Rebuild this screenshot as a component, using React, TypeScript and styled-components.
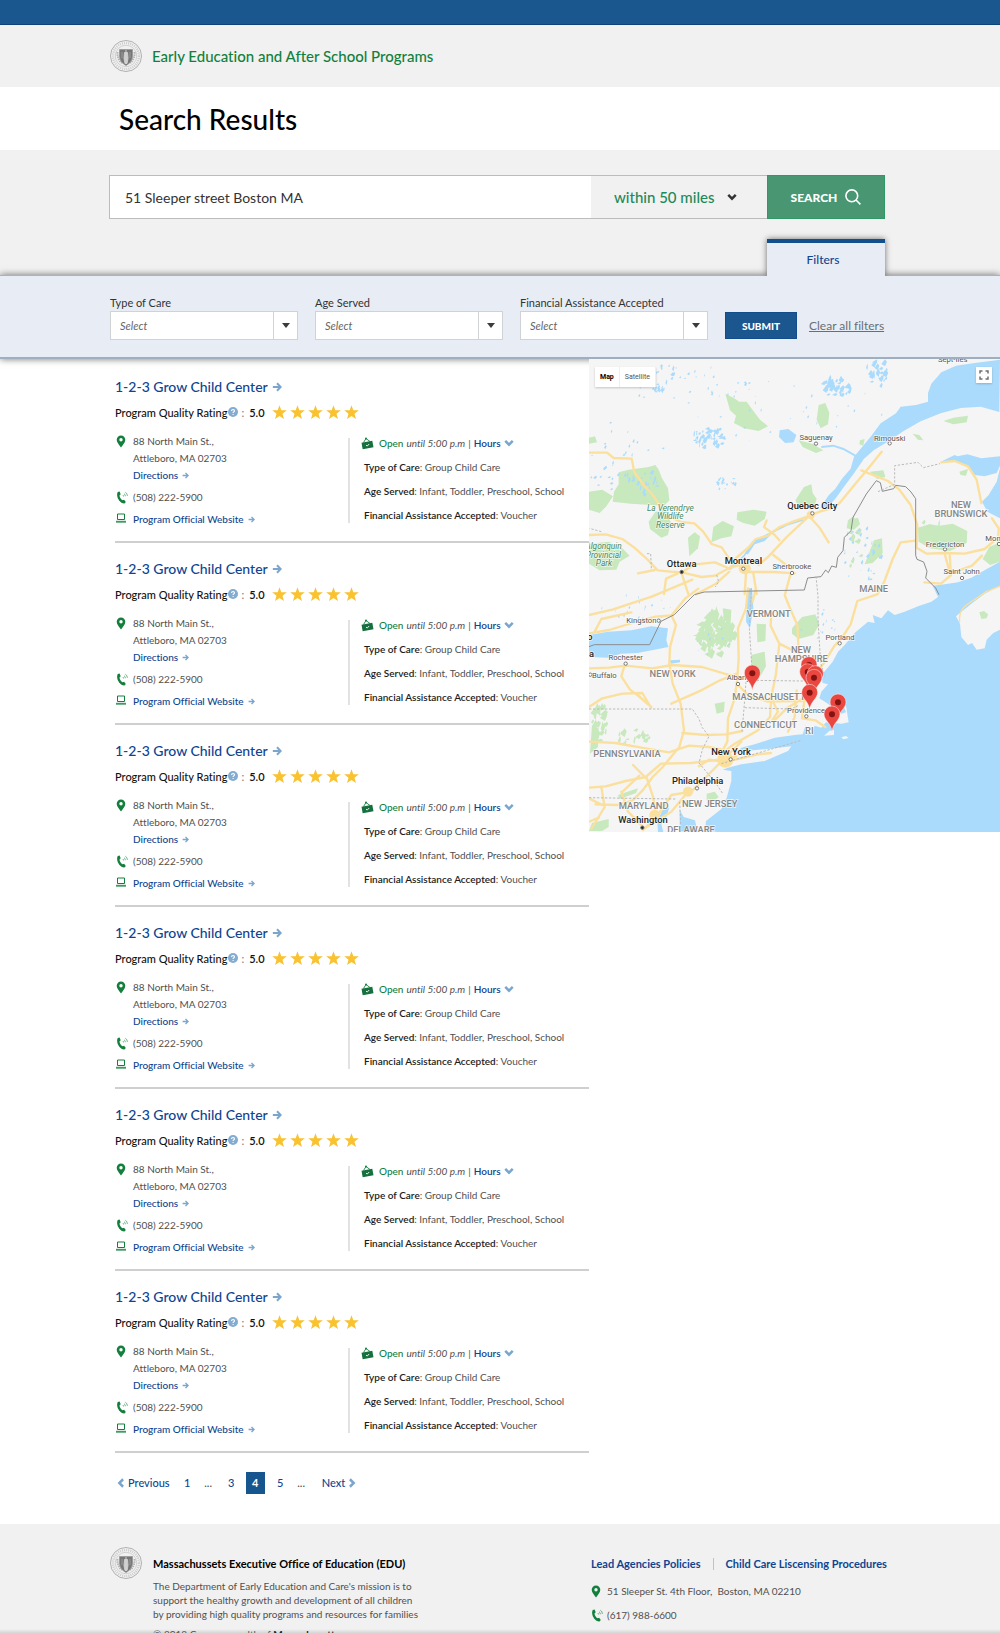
import React from "react";
import styled, { createGlobalStyle } from "styled-components";

const c = {
  navy: "#14558f",
  link: "#0f4490",
  pale: "#7ba5cd",
  green: "#12803c",
  text: "#505050",
  grey: "#f1f1f1",
  panel: "#e8edf5",
  water: "#abdbfc",
  land: "#f5f5f5",
  park: "#c8e8bd",
  road: "#fbdf9c",
};

const GlobalStyle = createGlobalStyle`
  *, *::before, *::after { box-sizing: border-box; }
  body {
    margin: 0;
    background: #fff;
    color: ${c.text};
    font-family: Lato, "Open Sans", sans-serif;
    font-size: 10px;
    font-variant-ligatures: none;
  }
  h1, h2, h3, p, address { margin: 0; font-style: normal; }
  a { text-decoration: none; }
  button, input, select { font: inherit; border-radius: 0; }
  svg { display: block; flex: none; }
`;

/* ---------- Icons ---------- */

const Seal = () => (
  <svg width="32" height="32" viewBox="0 0 64 64" aria-hidden="true">
    <circle cx="32" cy="32" r="31" fill="#f4f4f4" stroke="#b0b0b0" strokeWidth="2" />
    <circle cx="32" cy="32" r="26" fill="none" stroke="#cfcfcf" strokeWidth="5" strokeDasharray="2.4 1.8" />
    <circle cx="32" cy="32" r="21.500" fill="#f0f0f0" stroke="#c4c4c4" strokeWidth="1.500" />
    <path d="M15 24q-1 14 9 22M49 24q1 14-9 22" fill="none" stroke="#b4b4b4" strokeWidth="4" strokeDasharray="3 1.500" />
    <path d="M19 19h26v14q-1 12-13 18Q20 45 19 33z" fill="#777" stroke="#969696" strokeWidth="1.500" />
    <path d="M32 20v4M29 25h6l1 12-2 10h-4l-2-10z" fill="#d0d0d0" stroke="#d0d0d0" strokeWidth="2" />
    <path d="M24 24v12M40 24v12" stroke="#9b9b9b" strokeWidth="2" />
  </svg>
);

const ArrowRight = ({ size }: { size: number }) => (
  <svg width={size} height={size} viewBox="0 0 12 12" fill="none" stroke={c.pale} strokeWidth="2.4" aria-hidden="true">
    <path d="M1 6h9M6 1.5 10.4 6 6 10.5" />
  </svg>
);

const Chevron = ({ turn = 0, color = c.pale }: { turn?: number; color?: string }) => (
  <svg width="10" height="10" viewBox="0 0 12 12" fill="none" stroke={color} strokeWidth="3" aria-hidden="true">
    <path d="M1.5 3.5 6 8l4.500-4.500" transform={`rotate(${turn} 6 6)`} />
  </svg>
);

const Pin = () => (
  <svg width="10" height="13" viewBox="0 0 10 13" aria-hidden="true">
    <path fill={c.green} fillRule="evenodd" d="M5 .5a4.300 4.300 0 0 1 4.300 4.300C9.300 7.500 7 9.500 5 12.600 3 9.500.7 7.500.7 4.800A4.300 4.300 0 0 1 5 .5Zm0 2.600a1.700 1.700 0 1 0 0 3.400 1.700 1.700 0 0 0 0-3.400Z" />
  </svg>
);

const Phone = () => (
  <svg width="13" height="13" viewBox="0 0 13 13" fill="none" stroke={c.green} aria-hidden="true">
    <path fill={c.green} stroke="none" d="M1.700 1 3.600.5 4.700 3.300 3.500 4.400c.2 1.900 1.400 3.900 3.100 4.900l1.500-.6 1.700 2.300-1.300 1.500C4.200 13-.6 6 1.700 1Z" />
    <path strokeWidth=".8" opacity=".75" d="M7 4 7.600 5.500M8 2.700q1.300.7 1.400 2.500M9.300 1.200Q11.300 2.200 11.400 4.900" />
  </svg>
);

const Laptop = () => (
  <svg width="10" height="10" viewBox="0 0 10 10" aria-hidden="true">
    <path d="M1.500 1h7v5.500h-7z" fill="#fff" stroke={c.green} />
    <path d="M0 7.800h10v1.900H0z" fill={c.green} opacity=".8" />
  </svg>
);

const OpenSign = () => (
  <svg width="13" height="13" viewBox="0 0 13 13" aria-hidden="true">
    <path d="M2.500 5.500 5 1.500l4 3" fill="none" stroke={c.green} strokeWidth=".9" />
    <circle cx="5" cy="1.600" r="1" fill={c.green} />
    <path d="m.5 5.800 10.800-2 1.200 6.400-10.800 2z" fill="#166f3e" />
    <path d="m5 8 1.200 1.100L8.200 7" fill="none" stroke="#e4f3ea" strokeWidth="1" />
  </svg>
);

const Star = () => (
  <svg width="15" height="15" viewBox="0 0 14 14" aria-hidden="true">
    <path fill="#f9c22e" d="m7 .2 1.700 4.700 5.100.1-4 3.100 1.400 5L7 10.200l-4.200 2.900 1.400-5-4-3.100 5.100-.1z" />
  </svg>
);

const Help = () => (
  <svg width="10" height="10" viewBox="0 0 10 10" aria-hidden="true">
    <circle cx="5" cy="5" r="5" fill="#84abd0" />
    <path d="M3.500 4q.1-1.500 1.600-1.500 1.400.1 1.400 1.300 0 .8-.9 1.200-.5.300-.5.900M5.100 7v.9" fill="none" stroke="#fff" strokeWidth="1.100" />
  </svg>
);

const SearchIcon = () => (
  <svg width="16" height="16" viewBox="0 0 16 16" fill="none" stroke="#fff" strokeWidth="1.600" aria-hidden="true">
    <circle cx="6.800" cy="6.800" r="5.900" />
    <path d="m11 11 4.400 4.400" />
  </svg>
);

const Expand = () => (
  <svg width="10" height="10" viewBox="0 0 10 10" fill="none" stroke="#707070" strokeWidth="1.500" aria-hidden="true">
    <path d="M1 3.500V1h2.500M6.500 1H9v2.500M9 6.500V9H6.500M3.500 9H1V6.500" />
  </svg>
);

/* ---------- Header and search ---------- */

const TopBar = styled.div`
  height: 25px;
  background: #19578e;
  border-bottom: 1px solid #0d4379;
`;

const Brand = styled.header`
  display: flex;
  align-items: center;
  gap: 10px;
  height: 62px;
  padding: 0 110px;
  background: ${c.grey};
`;

const BrandLink = styled.a`
  color: ${c.green};
  font-size: 15px;
  font-weight: 500;
`;

const PageTitle = styled.h1`
  padding: 15px 119px 14px;
  color: #000;
  font-size: 28px;
  font-weight: 500;
  line-height: 34px;
`;

const SearchArea = styled.section`
  padding: 25px 115px 0 109px;
  background: ${c.grey};
`;

const SearchForm = styled.form`
  display: flex;
  height: 44px;
`;

const SearchInput = styled.input`
  flex: 1;
  min-width: 0;
  padding: 0 15px;
  border: 1px solid #bcbcbc;
  border-right: 0;
  background: #fff;
  color: #333;
  font-size: 14px;
`;

const Distance = styled.div`
  display: flex;
  align-items: center;
  width: 176px;
  padding-left: 23px;
  border: solid #bcbcbc;
  border-width: 1px 0;
`;

const DistanceSelect = styled.select`
  appearance: none;
  width: 113px;
  padding: 0;
  border: 0;
  background: none;
  color: #1d8957;
  font-size: 15px;
  font-weight: 500;
`;

const SearchButton = styled.button`
  display: flex;
  align-items: center;
  justify-content: center;
  gap: 8px;
  width: 118px;
  border: 1px solid #2e9967;
  background: #489672;
  color: #fff;
  font-size: 12px;
  font-weight: 900;
`;

const TabRow = styled.div`
  display: flex;
  justify-content: flex-end;
  padding-top: 20px;
`;

const FilterTab = styled.button`
  z-index: 1;
  width: 118px;
  height: 37px;
  margin-bottom: -1px;
  padding: 0 6px 0 0;
  border: 0;
  border-top: 4px solid #124f8d;
  background: ${c.panel};
  box-shadow: 0 0 6px rgba(0, 0, 0, 0.55);
  clip-path: inset(-8px -8px 0);
  color: ${c.link};
  font-size: 12px;
  font-weight: 500;
`;

const Filters = styled.form`
  display: flex;
  align-items: flex-end;
  gap: 17px;
  padding: 20px 110px 17px;
  border-top: 1px solid #a3b4c8;
  border-bottom: 2px solid #9fafc0;
  background: ${c.panel};
  box-shadow: 0 0 7px rgba(0, 0, 0, 0.55);
`;

const Field = styled.label`
  display: grid;
  gap: 1px;
  width: 188px;
  color: #333;
  font-size: 11px;
  line-height: 14px;
`;

const SelectBox = styled.span`
  display: grid;
  grid-template-columns: 1fr 24px;
  height: 29px;
  border: 1px solid #cfd3d6;
  background: #fff;
`;

const FilterSelect = styled.select`
  grid-area: 1 / 1 / 2 / 3;
  appearance: none;
  padding: 0 9px;
  border: 0;
  background: none;
  color: #666;
  font-size: 11px;
  font-style: italic;
`;

const SelectArrow = styled.span`
  grid-area: 1 / 2;
  display: grid;
  place-items: center;
  border-left: 1px solid #cfd3d6;
  pointer-events: none;
  &::after {
    content: "";
    border: solid transparent;
    border-width: 5px 4px 0;
    border-top-color: #3c3c3c;
  }
`;

const Actions = styled.div`
  display: flex;
  align-items: center;
  gap: 12px;
  height: 29px;
`;

const Submit = styled.button`
  width: 72px;
  height: 27px;
  padding: 0;
  border: 1px solid #124c8c;
  background: #1b578e;
  color: #fff;
  font-size: 10px;
  font-weight: 900;
`;

const ClearLink = styled.a`
  color: #6a6f75;
  font-size: 12px;
  text-decoration: underline;
  white-space: nowrap;
`;

/* ---------- Results ---------- */

const Content = styled.main`
  display: grid;
  grid-template-columns: minmax(0, 589fr) minmax(0, 411fr);
  align-items: start;
`;

const List = styled.div`
  padding: 2px 0 0 115px;
`;

const Card = styled.article`
  padding: 16px 0 13px;
  border-bottom: 2px solid #cfcfcf;
`;

const CardTitle = styled.h2`
  font-size: 14px;
  font-weight: 500;
  line-height: 20px;
`;

const IconLink = styled.a<{ $gap?: number }>`
  display: inline-flex;
  align-items: center;
  gap: ${(p) => p.$gap ?? 4}px;
  color: ${c.link};
  font-weight: 500;
`;

const Rating = styled.div`
  display: flex;
  align-items: center;
  height: 16px;
  margin-top: 7px;
  color: #111;
  font-size: 11px;
`;

const RatingLabel = styled.span`
  display: flex;
  align-items: center;
  gap: 1px;
  font-weight: 500;
`;

const Colon = styled.span`
  margin: 0 5px 0 3px;
  color: #777;
`;

const Score = styled.span`
  font-weight: 600;
`;

const Stars = styled.span`
  display: flex;
  gap: 3px;
  margin-left: 7px;
`;

const Details = styled.div`
  display: grid;
  grid-template-columns: 233px 2px 1fr;
  margin-top: 13px;
`;

const Contact = styled.div`
  display: grid;
  gap: 5px;
  line-height: 17px;
`;

const ContactRow = styled.div`
  display: grid;
  grid-template-columns: 18px 1fr;
  & > svg { margin: 2px 0 0 1px; }
`;

const Directions = styled.div`
  & > ${IconLink} { display: flex; }
`;

const Rule = styled.div`
  margin: 5px 0;
  background: #e2e2e2;
`;

const Facts = styled.div`
  display: grid;
  align-content: start;
  gap: 8px;
  padding: 2px 0 0 14px;
  line-height: 16px;
  white-space: nowrap;
`;

const Fact = styled.p`
  & > b { color: #1c1c1c; font-weight: 600; }
`;

const OpenRow = styled.div`
  display: flex;
  align-items: center;
  gap: 3px;
  margin-left: -3px;
`;

const OpenWord = styled.span`
  margin-left: 2px;
  color: ${c.green};
  font-weight: 500;
`;

const HoursButton = styled.button`
  display: flex;
  align-items: center;
  gap: 3px;
  padding: 0;
  border: 0;
  background: none;
  color: ${c.link};
  font-weight: 600;
`;

const Pagination = styled.nav`
  display: flex;
  align-items: center;
  padding: 19px 0 30px 1px;
  font-size: 11px;
  font-weight: 500;
  line-height: 22px;
`;

const PageItem = styled.a`
  width: 21px;
  margin-right: 1px;
  color: ${c.link};
  text-align: center;
  &[aria-current] {
    width: 19px;
    margin: 0 5px 0 3px;
    background: #17558f;
    color: #fff;
    font-weight: 700;
  }
`;

const Dots = styled.span`
  width: 19px;
  margin-right: 3px;
  text-align: center;
`;

const Step = styled(IconLink)<{ $before?: number; $after?: number }>`
  margin: 0 ${(p) => p.$after ?? 0}px 0 ${(p) => p.$before ?? 0}px;
`;

const ResultCard = () => (
  <Card>
    <CardTitle><IconLink href="#center">1-2-3 Grow Child Center <ArrowRight size={10} /></IconLink></CardTitle>
    <Rating>
      <RatingLabel>Program Quality Rating <Help /></RatingLabel>
      <Colon>:</Colon>
      <Score>5.0</Score>
      <Stars role="img" aria-label="5 out of 5 stars">{[1, 2, 3, 4, 5].map((n) => <Star key={n} />)}</Stars>
    </Rating>
    <Details>
      <Contact>
        <ContactRow>
          <Pin />
          <Directions>
            <address>88 North Main St.,<br />Attleboro, MA 02703</address>
            <IconLink href="#directions">Directions <ArrowRight size={7} /></IconLink>
          </Directions>
        </ContactRow>
        <ContactRow><Phone /><span>(508) 222-5900</span></ContactRow>
        <ContactRow><Laptop /><span><IconLink href="#website">Program Official Website <ArrowRight size={7} /></IconLink></span></ContactRow>
      </Contact>
      <Rule />
      <Facts>
        <OpenRow>
          <OpenSign /><OpenWord>Open</OpenWord> <i>until 5:00 p.m</i> <span>|</span>
          <HoursButton type="button">Hours <Chevron /></HoursButton>
        </OpenRow>
        <Fact><b>Type of Care</b>: Group Child Care</Fact>
        <Fact><b>Age Served</b>: Infant, Toddler, Preschool, School</Fact>
        <Fact><b>Financial Assistance Accepted</b>: Voucher</Fact>
      </Facts>
    </Details>
  </Card>
);

/* ---------- Map ---------- */

const MapPane = styled.section`
  position: relative;
`;

const MapSvg = styled.svg`
  width: 100%;
  height: auto;
  font-family: Roboto, sans-serif;
`;

const MapTypes = styled.div`
  position: absolute;
  top: 8px;
  left: 6px;
  display: flex;
  box-shadow: 0 1px 2px rgba(0, 0, 0, 0.2);
`;

const MapType = styled.button<{ $active?: boolean }>`
  height: 20px;
  padding: 0 5px;
  border: 0;
  border-right: 1px solid #eee;
  background: #fff;
  color: ${(p) => (p.$active ? "#000" : "#555")};
  font-family: Roboto, sans-serif;
  font-size: 7px;
  font-weight: ${(p) => (p.$active ? 700 : 400)};
`;

const FullScreen = styled.button`
  position: absolute;
  top: 8px;
  right: 8px;
  display: grid;
  place-items: center;
  width: 16px;
  height: 16px;
  padding: 0;
  border: 0;
  background: #fff;
  box-shadow: 0 1px 2px rgba(0, 0, 0, 0.2);
`;

/* Scatters small irregular blobs over an ellipse; the seed keeps them in place. */
function scatter(cx: number, cy: number, rx: number, ry: number, count: number, size: number, seed: number) {
  let s = seed;
  const rnd = () => ((s = (s * 16807) % 2147483647) / 2147483647);
  let d = "";
  for (let i = 0; i < count; i++) {
    const a = rnd() * 6.283;
    const r = Math.sqrt(rnd());
    const x = cx + Math.cos(a) * rx * r;
    const y = cy + Math.sin(a) * ry * r;
    const w = size * (0.3 + rnd());
    const h = size * (0.4 + rnd() * 1.4);
    d += `M${x.toFixed()} ${y.toFixed()}l${w.toFixed()} ${(-h).toFixed()} ${(w / 2).toFixed()} ${(h / 2).toFixed()} ${(-w / 2).toFixed()} ${h.toFixed()}z`;
  }
  return d;
}

const lakes = [
  scatter(360, 250, 48, 32, 50, 8, 11),
  scatter(740, 100, 46, 30, 38, 9, 23),
  scatter(300, 90, 180, 60, 28, 5, 37),
  scatter(860, 60, 36, 40, 24, 9, 41),
  scatter(160, 385, 45, 38, 18, 8, 53),
  scatter(410, 390, 30, 25, 16, 6, 67),
  scatter(230, 60, 30, 40, 10, 7, 71),
  scatter(60, 370, 60, 40, 12, 6, 83),
  scatter(210, 105, 16, 12, 12, 7, 97),
  scatter(820, 600, 60, 90, 34, 6, 101),
  scatter(600, 180, 300, 110, 30, 4, 113),
  scatter(120, 280, 120, 100, 20, 5, 127),
  scatter(160, 760, 130, 40, 22, 4, 131),
  scatter(380, 860, 60, 60, 12, 4, 139),
  scatter(690, 800, 60, 60, 14, 4, 149),
];

const parks = [
  "M412 116l24 12 18 12 22 0 14 20 26 34 24 20-28 14-44-8-30-16 6-22-18-16z",
  "M692 150l20-6 12 30-4 34-22 12-12-26z",
  "M92 352l30-8 60-8 20-6 10 14 10 26 18 30 4 36-16 16-100-6-54-6 4-30 14-22z",
  "M182 500l20-30 24-6 22 36-8 40-20 8-34-26z",
  "M3 410l40-6 32 20-20 30-20 20-32-10z",
  "M3 566l60-6 40 20 22 22-30 18-10 24-50 2-32-20z",
  "M648 396l22-8 4 26 12 18-10 30-46-10-8-16z",
  "M448 472l48-8 40 6-6 22-30 20-34-8-20-10z",
  "M376 516l28-18 34 16-8 30-30 6-30 12z",
  "M300 548l20-16 16 12-6 36-26 24z",
  "M990 518l34-10 30 4 40-6 44 22-2 36-50 24-60-8-34-20z",
  "M1184 612l20-36 32-14v58l-30 10z",
  "M858 556l24-6 2 44-30 30-24 4z",
  "M780 496l30-8 6 20-18 16-22-4z",
  "M1066 198l30-10 44-6-4 20-40 6z",
  "M974 236l20 4 12 16-16-2z",
  "M846 350l40-4 6 20-24 6zM1114 350l26-8-6 20-16-2z",
  "M3 248l18-4 6 18-24 4zM816 256l14-4-4 20-12-4zM632 256l40 10 34 20-22 8-40-18z",
  "M612 820l30-34 40-8 12 30-18 32-44 12-20-16z",
  "M506 806l28 2-2 50-24 4zM490 900l40-10 4 44-26 46-18-24z",
  "M404 760l26 4-2 36-20-2z",
  "M380 1046l30-6-2 30-22 6zM356 1316l24-6 12 16-20 16-16-8z",
  "M12 1110l20 10-2 56-24 20zM90 1320l60-20-6 14-50 18z",
  "M12 1404l50-12 0 24-20 12H3z",
  scatter(370, 840, 56, 66, 90, 15, 211),
  scatter(30, 1110, 28, 60, 22, 13, 223),
  scatter(130, 1150, 50, 24, 16, 10, 227),
  scatter(790, 560, 30, 80, 10, 11, 229),
  scatter(1010, 510, 50, 40, 4, 10, 233),
];

const roads = [
  "M3 293l54 0 20 16 54 2 8 40 26 36 30 34 20 30 30 34 34 16 40 4 26 24 26 38 30 10 20 30",
  "M3 540l50-2 50 14 36 26 40 36 30 32 40 4 32 2 60 14 40-4 44-24 30-8",
  "M150 655l50-10M281 652l40-24 60-6 46 20M270 655l-36 16-6 46M281 655l20 62",
  "M427 640l16-30 40-34 20-24 36-10 36-26 40-16 46-16 34-14 34-10 26-16 46-56 50-60 30-38",
  "M666 486l30 34 26 42M656 490l-60 56-54 58-30 26M536 496l-8 20 30 22 16 18M556 600l54 42M620 655l-60-4-90 0M608 655l-16 60",
  "M474 655l-4 62M496 655l10 62M424 650l-40 36-60 32",
  "M820 346l40 16 40 16 34 26 34 46 20 60-2 68 30 18 54-2 60 2 60-14 30-26",
  "M988 556l-50 6-24 50-26 70-20 36-60 20-20 70-30 46-20 20-30 50-30 36",
  "M1070 596l16 60 66-24 30-30M1085 600l4 60-30 26-50-4",
  "M1060 322l40-4 40 16 26 40 14 70M1212 490l20 30-2 50",
  "M3 835l60-10 80-24 60-16 48-4 40-50 40-30M3 780l70-16 120-40 120-50M20 830l20-38 90-20",
  "M250 780l14 30-18 66-2 50 10 60 24 60 10 80-14 50-50 60-30 30-30 40-30 30-46 14-66-2",
  "M3 940l60-2 50-6 80 8 60-10 90 6 66 20 40 10M110 930l-10 34 26 40 24 18 30 26M150 1020l40 36M3 1056l40-26 60-14 60-2 26 44",
  "M250 1046l90-40 56-30 50-20M283 1134l70 6 60-2 50-10",
  "M480 700l-6 60-24 60 2 90-4 60-8 60-20 60-2 70-16 30M504 700l-10 40M550 776l-2 36 26 54 60 30M590 720l16 40 22 50 4 80M574 866l-10 90-14 70-4 60-36 40-70 40-40 30",
  "M450 990l30 30 60 20 70-2 40 0 20-60 10-30M626 1006l-6 80-20 44M556 1100l40-40 50-30M650 1030l-8 60 40 6 30 20M550 1030l20 40-20 30",
  "M3 1160l80 4 90 16 70 12 60-20 60 4 50 10M3 1298l50-4 60-16 60-12 46-40 90-2 86-10 50-10",
  "M175 1270l-40-40M104 1310l50-48M175 1265l20 60 10 60-40 40M100 1310l20 60 50 50M300 1310l-50 60-80 50M210 1380l40-60 60-10 50-50 50-50M40 1296l10 60-40 66M3 1330l40 20",
  "M403 1220l-40-6-30 20M403 1220l46-8 60-14 40-4M420 1200l40-40M3 1400l30-12",
];

const cities: [number, number][] = [
  [684, 266], [905, 265], [673, 475], [466, 641], [612, 654], [1071, 583], [1122, 669], [1233, 567],
  [212, 797], [113, 926], [450, 987], [755, 865], [655, 1084], [428, 1213], [327, 1300], [7, 959],
];

type Label = [string, number, number, "city" | "town" | "state" | "park", ("start" | "middle" | "end")?];

const labels: Label[] = [
  ["Saguenay", 684, 254, "town"], ["Rimouski", 905, 257, "town"], ["Sept-Îles", 1094, 21, "town"],
  ["Quebec City", 673, 462, "city"], ["Montreal", 466, 627, "city"], ["Ottawa", 281, 636, "city"],
  ["Sherbrooke", 612, 642, "town"], ["Fredericton", 1071, 575, "town"], ["Saint John", 1121, 658, "town"],
  ["Moncton", 1192, 557, "town", "start"], ["NEW", 1119, 460, "state"], ["BRUNSWICK", 1119, 487, "state"],
  ["MAINE", 857, 711, "state"], ["La Verendrye", 247, 468, "park"], ["Wildlife", 247, 493, "park"],
  ["Reserve", 247, 518, "park"], ["Algonquin", 101, 583, "park", "end"], ["Provincial", 99, 608, "park", "end"],
  ["Park", 48, 632, "park"], ["Kingston", 160, 805, "town"], ["Rochester", 113, 915, "town"],
  ["Buffalo", 12, 968, "town", "start"], ["NEW YORK", 254, 967, "state"], ["VERMONT", 542, 787, "state"],
  ["NEW", 639, 894, "state"], ["HAMPSHIRE", 640, 921, "state"], ["Albany", 416, 976, "town", "start"],
  ["Portland", 756, 855, "town"], ["MASSACHUSETTS", 433, 1034, "state", "start"], ["Providence", 654, 1074, "town"],
  ["CONNECTICUT", 533, 1119, "state"], ["RI", 664, 1136, "state"], ["New York", 429, 1200, "city"],
  ["Philadelphia", 329, 1287, "city"], ["NEW JERSEY", 365, 1355, "state"], ["MARYLAND", 167, 1361, "state"],
  ["PENNSYLVANIA", 218, 1207, "state", "end"], ["Washington", 165, 1404, "city"], ["DELAWARE", 309, 1434, "state"],
  ["Toronto", 14, 854, "city", "end"], ["Mississauga", 18, 907, "city", "end"],
];

const labelStyle = {
  city: { fontSize: 28, fill: "#222", fontWeight: 500 },
  town: { fontSize: 23, fill: "#555", fontWeight: 400 },
  state: { fontSize: 28, fill: "#858585", fontWeight: 500 },
  park: { fontSize: 25, fill: "#45885d", fontWeight: 400, fontStyle: "italic" },
};

const pins: [number, number][] = [
  [493, 1008], [663, 983], [659, 1004], [682, 1010], [678, 1021], [665, 1066], [750, 1095], [732, 1131],
];

const ProgramMap = () => (
  <MapPane aria-label="Map of programs">
    <MapSvg viewBox="3 12 1233 1419" role="img" aria-label="Map of New England and Quebec">
      <path d="M3 12h1233v1419H3z" fill={c.land} />
      <g fill={c.park}>{parks.map((d, i) => <path key={i} d={d} />)}</g>
      <g fill={c.water}>
        {lakes.map((d, i) => <path key={i} d={d} />)}
        <path d="M1236 14l-76 10-56 8-44 20-30 34-10 28v26l-36 10-46 5-14 20-46 30-30 40-30 36-20 24-10 36-26 30-20 30-20 20-24 36 14 6 30-32 26-36 30-40 30-44 30-26 40-24 50-34 50-28 60-24 60-16 60-4 56 16z" />
        <path d="M1058 320l42-20 8 4 30-6 42 12 56-6v28l-10 22-36 10-30-4-20-26-30-14zM1236 340l-10 40-24 40-20 20 16 30 38 20z" />
        <path d="M575 226l26-4 24 18-8 22-26 2-18-18z" />
        <path d="M3 840l57-10 70-4 60-12 50 6-5 36 6 20-42 8-50 10-50 2-40 12-56-2z" />
        <path d="M246 916l30-2v8l-28 4zM478 700l14 0 4 60-10 60-12-20zM530 544l20-6-20 20-30 10-20 30-8-2 20-34z" />
        <path d="M1236 620l-36 20-50 28-40 14-40 6-36 4 16 34-20 14-40 14-40 16-30 10-20-14-20 24-26-10 6 24-20-4-40 34-30 36-20 20-16 30-20 24-14 16 4 24 16 4-20 22-6 20 26 16 14 14 26 16 14-4-10-26 10 6 8 50-22 4-46-4-14 16-20-6-10 26-20-6 4-24-10 30-24 2-60 8-60 20-40 10-20 20 30-10 70-6 70-8-10 14-70 30-70 10-40 10-16 6 26 4v30l-14 50-16 34-20 16-26 20-4 40h886z" />
        <path d="M275 1364l12 22 34 10 8 35h-54zM224 1364l20-6-10 30-14 20 6 23h-16l-2-32z" />
      </g>
      <path d="M700 276l36-4 30 10 36 20" fill="none" stroke={c.water} strokeWidth="6" />
      <path d="M430 640l40-40 26-40 40-20 60-30 50-16" fill="none" stroke={c.water} strokeWidth="5" />
      <g fill={c.land}>
        <path d="M1236 692l-46 24-40 30-46 38 12 22 4 40 20 24 12-6 14 20 24-4 6-26 20-20 20-10z" />
        <path d="M708 1142l16-14 14-4v16zM760 1147l14-4 8 6-16 4z" />
      </g>
      <path d="M1174 772l14-4 12 10-4 12-16 2z" fill={c.park} />
      <g fill="none" stroke={c.road} strokeWidth="7" strokeLinejoin="round" strokeLinecap="round">
        {roads.map((d, i) => <path key={i} d={d} />)}
        <path d="M1115 800q-4-30 20-50l60-40 40-16" strokeWidth="4" />
      </g>
      <g fill={c.road}>
        <circle cx="470" cy="640" r="18" /><circle cx="668" cy="480" r="12" /><circle cx="412" cy="1214" r="24" />
        <circle cx="300" cy="1310" r="15" /><circle cx="200" cy="1380" r="16" /><circle cx="672" cy="1000" r="16" />
      </g>
      <g fill="none" stroke="#8c8c8c" strokeWidth="3" strokeLinejoin="round">
        <path d="M3 875l16-6h166l34-70 40-20 60-60 30-8 300-6 10-36 40-4 14-20 8 8 10-20 14 4 4-30 16-20 4-40 20-20 6-40 40-70 30-40 12 6 6 26 34-8 6-10 30 4 16 16 14 20v170l4 12 20 8 10 28-4 20 30 30 10 20" />
      </g>
      <g fill="none" stroke="#bbb" strokeWidth="3" strokeDasharray="7 5">
        <path d="M870 410l50-22v-56l70-10 16 16 50-12" />
        <path d="M684 664l6 60v70l8 130 12 40M490 700l-6 120 10 150M494 976l150 2 20-14M470 1058l140 4 20-10M474 980l-6 80-6 70" />
        <path d="M3 1062h310l20 30 10 26 20 26-20 40-10 40 50 60 20 30M3 1328l260 4M275 1340l4 90M400 1226l240-70" />
        <path d="M190 640l-2-44-16 0M40 530l-36-10M386 660l6 20-10 16" />
      </g>
      <g fill="#fff" stroke="#777" strokeWidth="3">
        {cities.map(([x, y]) => <circle key={`${x}-${y}`} cx={x} cy={y} r="5" />)}
        <circle cx="281" cy="651" r="5" fill="#222" /><circle cx="163" cy="1418" r="5" fill="#222" />
      </g>
      {labels.map(([text, x, y, kind, anchor = "middle"], i) => (
        <text key={i} x={x} y={y} textAnchor={anchor} stroke="#fff" strokeOpacity=".75" strokeWidth="4" paintOrder="stroke" {...labelStyle[kind]}>
          {text}
        </text>
      ))}
      {pins.map(([x, y]) => (
        <g key={`${x}-${y}`} transform={`translate(${x} ${y})`}>
          <path d="M0 0C-2-28-24-34-24-54a24 24 0 0 1 48 0C24-34 2-28 0 0Z" fill="#e94740" stroke="#fff" strokeOpacity=".7" strokeWidth="2" />
          <circle cy="-53" r="9" fill="#811411" />
        </g>
      ))}
    </MapSvg>
    <MapTypes>
      <MapType type="button" $active>Map</MapType>
      <MapType type="button">Satellite</MapType>
    </MapTypes>
    <FullScreen type="button" aria-label="Toggle full screen"><Expand /></FullScreen>
  </MapPane>
);

/* ---------- Footer ---------- */

const Footer = styled.footer`
  display: grid;
  grid-template-columns: minmax(0, 481fr) minmax(0, 409fr);
  height: 109px;
  overflow: hidden;
  padding: 23px 0 0 110px;
  background: linear-gradient(to top, #d6d6d6, ${c.grey} 4px);
`;

const Office = styled.div`
  display: grid;
  grid-template-columns: 43px 1fr;
  align-content: start;
`;

const OfficeText = styled.div`
  padding-top: 9px;
  line-height: 14px;
`;

const OfficeName = styled.h3`
  margin-bottom: 7px;
  color: #000;
  font-size: 11px;
  font-weight: 700;
  line-height: 16px;
`;

const Copyright = styled.p`
  margin-top: 6px;
  & > b { color: #222; }
`;

const FooterContact = styled.div`
  display: grid;
  align-content: start;
  gap: 8px;
  padding-top: 9px;
  line-height: 16px;
`;

const FooterLinks = styled.div`
  display: flex;
  align-items: center;
  gap: 12px;
  margin-bottom: 3px;
  & > a {
    color: ${c.link};
    font-size: 11px;
    font-weight: 700;
  }
`;

const Bar = styled.span`
  width: 1px;
  height: 12px;
  background: #c2c2c2;
`;

const FooterRow = styled.div`
  display: flex;
  align-items: center;
  gap: 4px;
`;

const FooterIcon = styled.span`
  width: 12px;
`;

/* ---------- Page ---------- */

const filters = ["Type of Care", "Age Served", "Financial Assistance Accepted"];

export default function App() {
  return (
    <>
      <GlobalStyle />
      <TopBar />
      <Brand>
        <Seal />
        <BrandLink href="#home">Early Education and After School Programs</BrandLink>
      </Brand>
      <PageTitle>Search Results</PageTitle>
      <SearchArea>
        <SearchForm onSubmit={(e) => e.preventDefault()}>
          <SearchInput aria-label="Address" defaultValue="51 Sleeper street Boston MA" />
          <Distance>
            <DistanceSelect aria-label="Distance"><option>within 50 miles</option></DistanceSelect>
            <Chevron color="#333" />
          </Distance>
          <SearchButton>SEARCH <SearchIcon /></SearchButton>
        </SearchForm>
        <TabRow><FilterTab type="button">Filters</FilterTab></TabRow>
      </SearchArea>
      <Filters onSubmit={(e) => e.preventDefault()}>
        {filters.map((name) => (
          <Field key={name}>
            {name}
            <SelectBox>
              <FilterSelect><option>Select</option></FilterSelect>
              <SelectArrow />
            </SelectBox>
          </Field>
        ))}
        <Actions>
          <Submit>SUBMIT</Submit>
          <ClearLink href="#clear">Clear all filters</ClearLink>
        </Actions>
      </Filters>
      <Content>
        <List>
          {[1, 2, 3, 4, 5, 6].map((n) => <ResultCard key={n} />)}
          <Pagination aria-label="Result pages">
            <Step href="#prev" $gap={2} $after={7}><Chevron turn={90} /> Previous</Step>
            <PageItem href="#1">1</PageItem>
            <Dots>...</Dots>
            <PageItem href="#3">3</PageItem>
            <PageItem href="#4" aria-current="page">4</PageItem>
            <PageItem href="#5">5</PageItem>
            <Dots>...</Dots>
            <Step href="#next" $gap={2} $before={8}>Next <Chevron turn={-90} /></Step>
          </Pagination>
        </List>
        <ProgramMap />
      </Content>
      <Footer>
        <Office>
          <Seal />
          <OfficeText>
            <OfficeName>Massachussets Executive Office of Education (EDU)</OfficeName>
            <p>
              The Department of Early Education and Care's mission is to<br />
              support the healthy growth and development of all children<br />
              by providing high quality programs and resources for families
            </p>
            <Copyright>© 2018 Commonwealth of <b>Massachusetts</b></Copyright>
          </OfficeText>
        </Office>
        <FooterContact>
          <FooterLinks>
            <a href="#policies">Lead Agencies Policies</a>
            <Bar />
            <a href="#procedures">Child Care Liscensing Procedures</a>
          </FooterLinks>
          <FooterRow><FooterIcon><Pin /></FooterIcon><span>51 Sleeper St. 4th Floor, &nbsp;Boston, MA 02210</span></FooterRow>
          <FooterRow><FooterIcon><Phone /></FooterIcon><span>(617) 988-6600</span></FooterRow>
        </FooterContact>
      </Footer>
    </>
  );
}
